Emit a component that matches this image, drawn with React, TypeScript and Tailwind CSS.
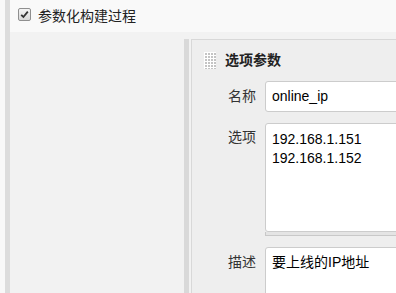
import React from 'react';

const font = { fontFamily: '"Liberation Sans", "Noto Sans CJK SC", sans-serif' };

function DragHandle() {
  const dots = [];
  for (let r = 0; r < 6; r++) {
    for (let c = 0; c < 4; c++) {
      dots.push(<rect key={`${r}-${c}`} x={1 + c * 3} y={1 + r * 3} width="2" height="2" fill="#c4c4c4" />);
    }
  }
  return (
    <svg width="12" height="17" viewBox="0 0 12 17" className="shrink-0 bg-white">
      {dots}
    </svg>
  );
}

function CheckBox() {
  return (
    <div className="flex h-[13px] w-[13px] items-center justify-center rounded-[2px] border border-[#8f8f8f] bg-gradient-to-b from-[#f4f4f4] to-[#d8d8d8]">
      <svg width="9" height="9" viewBox="0 0 9 9">
        <path d="M1.2 4.8 L3.4 7 L7.8 1.6" fill="none" stroke="#333" strokeWidth="1.8" />
      </svg>
    </div>
  );
}

export default function App() {
  return (
    <div className="flex h-[293px] w-[396px] overflow-hidden bg-[#f2f2f2] text-[14px] text-[#333]" style={font}>
      <div className="w-[5px] shrink-0 bg-[#f8f8f8]" />
      <div className="w-[5px] shrink-0 bg-[#dcdcdc]" />
      <div className="flex min-w-0 flex-1 flex-col">
        <div className="flex h-[32px] shrink-0 items-center gap-[7px] bg-[#f9f9f9] pl-[8px]">
          <div className="-mt-[3px]">
            <CheckBox />
          </div>
          <span className="text-[#222]">参数化构建过程</span>
        </div>
        <div className="flex min-h-0 flex-1 pt-[7px]">
          <div className="w-[174px] shrink-0" />
          <div className="w-[5px] shrink-0 bg-[#d9d9d9]" />
          <div className="w-[2px] shrink-0" />
          <div className="min-w-0 flex-1 border-l border-t border-[#d8d8d8] bg-[#eeeeee]">
            <div className="flex h-[17px] items-center gap-[9px] pl-[12px] mt-[12px]">
              <DragHandle />
              <span className="font-bold leading-[17px] text-[#222]">选项参数</span>
            </div>

            <div className="mt-[12px] flex items-center">
              <div className="w-[73px] shrink-0 pr-[9px] text-right">名称</div>
              <div className="h-[31px] w-[200px] shrink-0 rounded-[3px] border border-[#cccccc] bg-white pl-[6px] leading-[29px] text-black">
                online_ip
              </div>
            </div>

            <div className="mt-[11px] flex items-start">
              <div className="w-[73px] shrink-0 pr-[9px] pt-[5px] text-right leading-[19px]">选项</div>
              <div className="w-[200px] shrink-0">
                <div className="h-[109px] rounded-[3px] border border-[#cccccc] bg-white pl-[6px] pt-[6px] leading-[19px] text-black">
                  <div>192.168.1.151</div>
                  <div>192.168.1.152</div>
                </div>
                <div className="h-[4px] border border-t-0 border-[#c8c8c8] bg-[#e4e4e4]" />
              </div>
            </div>

            <div className="mt-[11px] flex items-start">
              <div className="w-[73px] shrink-0 pr-[9px] pt-[6px] text-right leading-[19px]">描述</div>
              <div className="h-[60px] w-[200px] shrink-0 rounded-[3px] border border-[#cccccc] bg-white pl-[6px] pt-[5px] leading-[19px] text-black">
                要上线的IP地址
              </div>
            </div>
          </div>
        </div>
      </div>
    </div>
  );
}
